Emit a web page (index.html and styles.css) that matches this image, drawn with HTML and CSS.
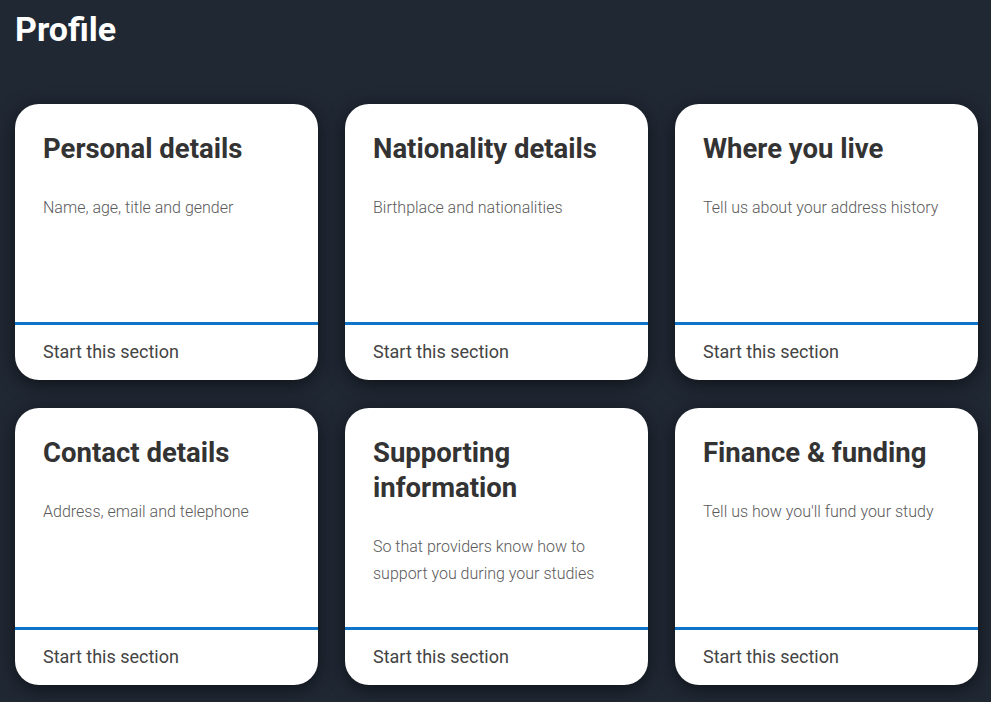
FILE: index.html
```html
<!DOCTYPE html>
<html lang="en">
<head>
  <meta charset="UTF-8">
  <meta name="viewport" content="width=device-width, initial-scale=1">
  <title>Profile</title>
  <link rel="stylesheet" href="styles.css">
</head>
<body>
  <main class="page">
    <h1 class="page-title">Profile</h1>

    <div class="cards">
      <a class="card" href="#">
        <div class="card-body">
          <h2>Personal details</h2>
          <p>Name, age, title and gender</p>
        </div>
        <div class="card-footer">Start this section</div>
      </a>
      <a class="card" href="#">
        <div class="card-body">
          <h2>Nationality details</h2>
          <p>Birthplace and nationalities</p>
        </div>
        <div class="card-footer">Start this section</div>
      </a>
      <a class="card" href="#">
        <div class="card-body">
          <h2>Where you live</h2>
          <p>Tell us about your address history</p>
        </div>
        <div class="card-footer">Start this section</div>
      </a>
      <a class="card" href="#">
        <div class="card-body">
          <h2>Contact details</h2>
          <p>Address, email and telephone</p>
        </div>
        <div class="card-footer">Start this section</div>
      </a>
      <a class="card" href="#">
        <div class="card-body">
          <h2>Supporting information</h2>
          <p>So that providers know how to support you during your studies</p>
        </div>
        <div class="card-footer">Start this section</div>
      </a>
      <a class="card" href="#">
        <div class="card-body">
          <h2>Finance &amp; funding</h2>
          <p>Tell us how you'll fund your study</p>
        </div>
        <div class="card-footer">Start this section</div>
      </a>
    </div>
  </main>
</body>
</html>
```

FILE: styles.css
```css
body {
  font-family: Roboto, "Liberation Sans", sans-serif;
  margin: 0;
  background: #202834;
  color: #333;
}
.page {
  padding: 9px 13px 20px 15px;
}
.page-title {
  margin: 0;
  color: #fff;
  font-size: 34px;
  font-weight: 700;
  line-height: 40px;
}
.cards {
  margin-top: 55px;
  display: grid;
  grid-template-columns: repeat(3, 303px);
  grid-template-rows: 276px 277px;
  column-gap: 27px;
  row-gap: 28px;
}
.card {
  display: flex;
  flex-direction: column;
  background: #fff;
  border-radius: 24px;
  box-shadow: 0 4px 18px rgba(0, 0, 0, 0.55);
  overflow: hidden;
  text-decoration: none;
  color: inherit;
}
.card-body {
  flex: 1;
  padding: 27px 28px 0;
}
.card-body h2 {
  margin: 0;
  font-size: 27.5px;
  font-weight: 700;
  line-height: 35px;
  color: #333;
}
.card-body p {
  margin: 28px 0 0;
  font-size: 16px;
  font-weight: 300;
  line-height: 27px;
  color: #5a5a5a;
}
.card-footer {
  border-top: 3px solid #0f74c8;
  height: 53px;
  padding: 0 28px 2px;
  display: flex;
  align-items: center;
  font-size: 18px;
  color: #444;
}
```
